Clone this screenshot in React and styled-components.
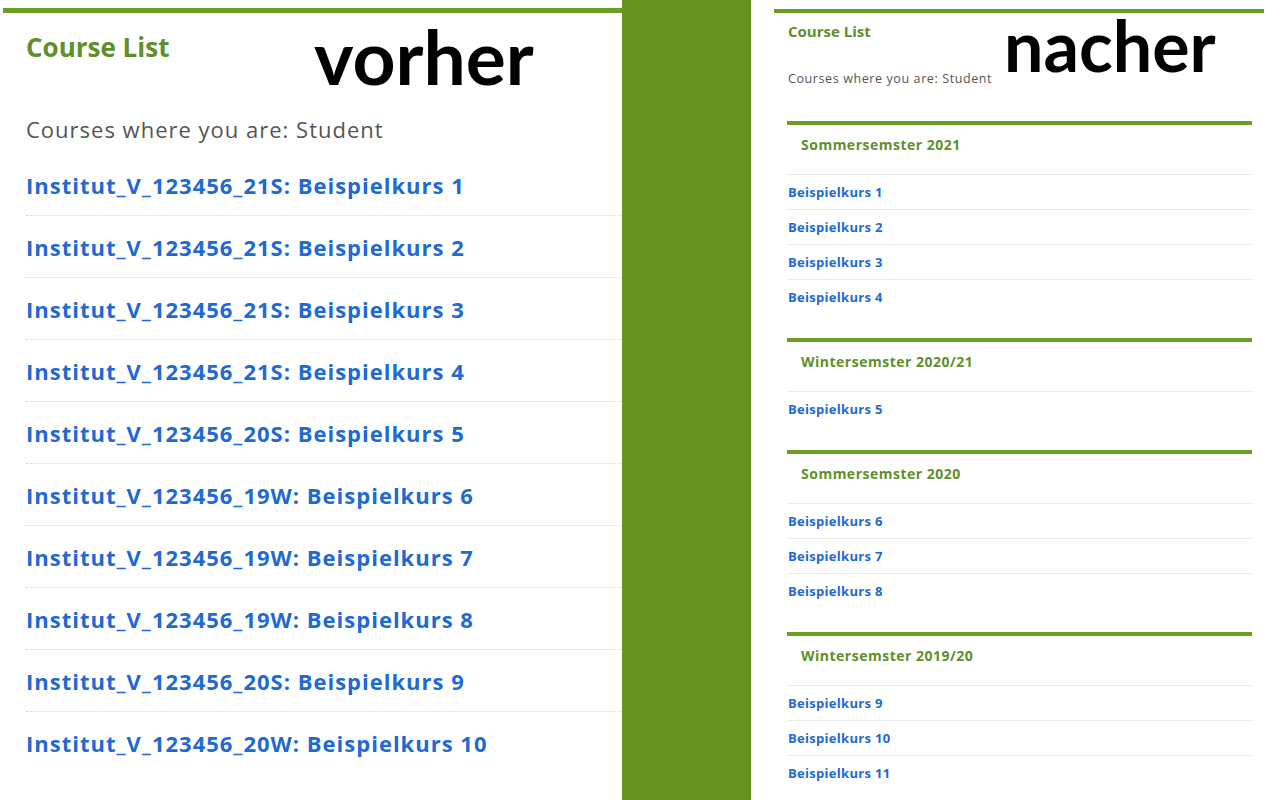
import React from "react";
import styled, { createGlobalStyle } from "styled-components";

const GlobalStyle = createGlobalStyle`
  html, body {
    margin: 0;
    padding: 0;
    background: #ffffff;
    font-family: "Open Sans", "Liberation Sans", sans-serif;
  }
  body {
    height: 800px;
    overflow: hidden;
  }
`;

const GREEN_LINE = "#6b9f24";
const GREEN_TEXT = "#5f8f2a";
const LINK_BLUE = "#2169d3";

const oldCourses = [
  "Institut_V_123456_21S: Beispielkurs 1",
  "Institut_V_123456_21S: Beispielkurs 2",
  "Institut_V_123456_21S: Beispielkurs 3",
  "Institut_V_123456_21S: Beispielkurs 4",
  "Institut_V_123456_20S: Beispielkurs 5",
  "Institut_V_123456_19W: Beispielkurs 6",
  "Institut_V_123456_19W: Beispielkurs 7",
  "Institut_V_123456_19W: Beispielkurs 8",
  "Institut_V_123456_20S: Beispielkurs 9",
  "Institut_V_123456_20W: Beispielkurs 10",
];

const semesters = [
  { name: "Sommersemster 2021", courses: [1, 2, 3, 4] },
  { name: "Wintersemster 2020/21", courses: [5] },
  { name: "Sommersemster 2020", courses: [6, 7, 8] },
  { name: "Wintersemster 2019/20", courses: [9, 10, 11] },
];

const Page = styled.div`
  display: flex;
  height: 800px;
`;

const OldPanel = styled.section`
  position: relative;
  width: 619px;
  margin: 8px 0 0 3px;
  border-top: 5px solid ${GREEN_LINE};
  padding: 16px 0 0 23px;
  box-sizing: border-box;
`;

const Divider = styled.div`
  width: 129px;
  flex-shrink: 0;
  background: #67921f;
`;

const NewPanel = styled.section`
  position: relative;
  width: 490px;
  margin: 9px 0 0 23px;
  border-top: 4px solid ${GREEN_LINE};
  padding: 8px 13px 0 14px;
  box-sizing: border-box;
`;

const Title = styled.h2`
  margin: 0;
  color: ${GREEN_TEXT};
  font-weight: 700;
  font-size: ${(p) => (p.$small ? "15px" : "26px")};
  line-height: ${(p) => (p.$small ? "20px" : "37px")};
`;

const Subtitle = styled.p`
  margin: ${(p) => (p.$small ? "29px 0 0" : "48px 0 10px")};
  color: #555555;
  font-size: ${(p) => (p.$small ? "12.5px" : "22px")};
  line-height: ${(p) => (p.$small ? "17px" : "30px")};
  letter-spacing: ${(p) => (p.$small ? "0.6px" : "1px")};
`;

const Annotation = styled.div`
  position: absolute;
  left: ${(p) => p.$left}px;
  top: ${(p) => p.$top}px;
  font-family: Lato, "Open Sans", sans-serif;
  font-weight: 700;
  font-size: ${(p) => p.$size}px;
  line-height: 1;
  color: #000000;
`;

const OldList = styled.ul`
  list-style: none;
  margin: 0;
  padding: 0;
`;

const OldItem = styled.li`
  padding: 16px 0 15px;
  border-bottom: 1px dotted #d8d8d8;
  &:last-child {
    border-bottom: none;
  }
`;

const CourseLink = styled.a`
  color: ${LINK_BLUE};
  font-weight: 700;
  text-decoration: none;
  font-size: ${(p) => (p.$small ? "13px" : "22px")};
  line-height: ${(p) => (p.$small ? "18px" : "30px")};
  letter-spacing: ${(p) => (p.$small ? "0.3px" : "1px")};
  display: block;
`;

const Semester = styled.div`
  margin: 34px -1px 0 -1px;
  border-top: 4px solid ${GREEN_LINE};
  & + & {
    margin-top: 24px;
  }
`;

const SemesterName = styled.h3`
  margin: 0;
  padding: 10px 14px 20px;
  color: ${GREEN_TEXT};
  font-size: 14px;
  line-height: 19px;
  font-weight: 700;
  letter-spacing: 0.5px;
`;

const NewItem = styled.div`
  border-top: 1px dotted #d8d8d8;
  padding: 8px 1px;
`;

export default function App() {
  return (
    <>
      <GlobalStyle />
      <Page>
        <OldPanel>
          <Annotation $left={311} $top={6} $size={75}>
            vorher
          </Annotation>
          <Title>Course List</Title>
          <Subtitle>Courses where you are: Student</Subtitle>
          <OldList>
            {oldCourses.map((c) => (
              <OldItem key={c}>
                <CourseLink href="#">{c}</CourseLink>
              </OldItem>
            ))}
          </OldList>
        </OldPanel>
        <Divider />
        <NewPanel>
          <Annotation $left={230} $top={-3} $size={70}>
            nacher
          </Annotation>
          <Title $small>Course List</Title>
          <Subtitle $small>Courses where you are: Student</Subtitle>
          {semesters.map((s) => (
            <Semester key={s.name}>
              <SemesterName>{s.name}</SemesterName>
              {s.courses.map((n) => (
                <NewItem key={n}>
                  <CourseLink $small href="#">
                    Beispielkurs {n}
                  </CourseLink>
                </NewItem>
              ))}
            </Semester>
          ))}
        </NewPanel>
      </Page>
    </>
  );
}
